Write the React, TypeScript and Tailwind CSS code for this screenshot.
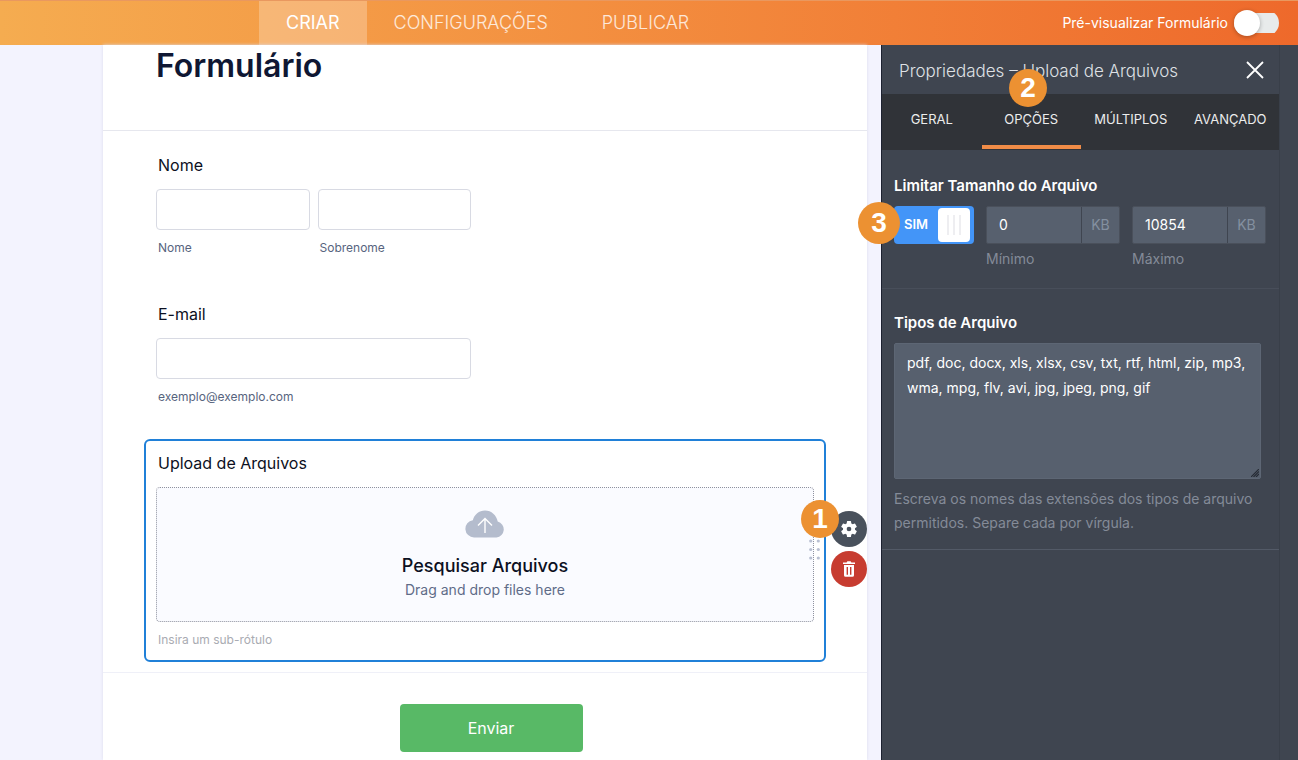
import React, { useState } from 'react';
import clsx from 'clsx';

const NAV_ITEMS = ['CRIAR', 'CONFIGURAÇÕES', 'PUBLICAR'];
const PANEL_TABS = ['GERAL', 'OPÇÕES', 'MÚLTIPLOS', 'AVANÇADO'];
const FILE_TYPES = 'pdf, doc, docx, xls, xlsx, csv, txt, rtf, html, zip, mp3, wma, mpg, flv, avi, jpg, jpeg, png, gif';

function StepBadge({ step, className }: { step: number; className: string }) {
  return (
    <span
      className={clsx(
        'absolute z-20 flex items-center justify-center rounded-full bg-[#ec9132] font-["Liberation_Sans",sans-serif] text-[28px] leading-none font-bold text-white',
        className
      )}
    >
      {step}
    </span>
  );
}

function Header() {
  const [active, setActive] = useState('CRIAR');

  return (
    <header className="flex h-[45px] items-stretch border-t border-[#e9985f] bg-linear-to-r from-[#f5ac50] to-[#ee692b]">
      <nav className="flex flex-1 pl-[259px]">
        {NAV_ITEMS.map((item) => (
          <button
            key={item}
            onClick={() => setActive(item)}
            className={clsx(
              'cursor-pointer px-[27px] text-lg',
              active === item ? 'bg-white/25 text-white' : 'font-light text-white/80'
            )}
          >
            {item}
          </button>
        ))}
      </nav>
      <label className="flex cursor-pointer items-center gap-1.5 pr-[19px] text-sm text-white">
        Pré-visualizar Formulário
        <input type="checkbox" role="switch" className="peer sr-only" />
        <span className="flex w-[45px] items-center rounded-full bg-[linear-gradient(#e8ebeb,#e8ebeb)] bg-[length:100%_20px] bg-center bg-no-repeat peer-checked:justify-end">
          <span className="size-[26px] rounded-full bg-white shadow-[0_1px_4px_rgba(0,0,0,0.3)]" />
        </span>
      </label>
    </header>
  );
}

const inputClass = 'h-[41px] w-full rounded-sm border border-[#d8dae3] bg-white px-3 text-base text-[#0a1551]';
const labelClass = 'pl-0.5 text-base leading-6 text-[#0c1022]';
const subLabelClass = 'pl-0.5 text-xs leading-5 text-[#57647e]';

function FormCanvas() {
  return (
    <main className="flex-1 bg-[#f3f3fe] pr-3.5 pl-[103px]">
      <form className="min-h-full bg-white shadow-[0_0_3px_#dcdcec]" onSubmit={(e) => e.preventDefault()}>
        <div className="h-[86px] border-b border-[#e6e7ee] px-[53px]">
          <h1 className="text-[32px] leading-[42px] font-semibold text-[#0f1733]">Formulário</h1>
        </div>

        <div className="border-b border-[#eff0f8] px-[41px] pt-[22px] pb-2.5">
          {/* Full name */}
          <fieldset className="px-3">
            <legend className={labelClass}>Nome</legend>
            <div className="grid max-w-[315px] grid-cols-2 gap-2 pt-3">
              <div className="flex flex-col gap-2">
                <input id="first-name" type="text" className={inputClass} />
                <label htmlFor="first-name" className={subLabelClass}>Nome</label>
              </div>
              <div className="flex flex-col gap-2">
                <input id="last-name" type="text" className={inputClass} />
                <label htmlFor="last-name" className={subLabelClass}>Sobrenome</label>
              </div>
            </div>
          </fieldset>

          {/* E-mail */}
          <div className="flex flex-col px-3 pt-11">
            <label htmlFor="email" className={labelClass}>E-mail</label>
            <div className="flex max-w-[315px] flex-col gap-2 pt-3">
              <input id="email" type="email" className={inputClass} aria-describedby="email-hint" />
              <span id="email-hint" className={subLabelClass}>exemplo@exemplo.com</span>
            </div>
          </div>

          {/* Selected field */}
          <section className="relative mt-8 rounded-md border-2 border-[#2080d8] px-2.5 pt-2.5 pb-2.5">
            <h2 className={labelClass}>Upload de Arquivos</h2>
            <button
              type="button"
              className="mt-3 flex h-[135px] w-full cursor-pointer flex-col items-center rounded-sm border border-dotted border-[#8f929e] bg-[#fafbff] pt-[22px]"
            >
              <svg width="40" height="28" viewBox="0 0 40 28" fill="none" aria-hidden="true">
                <path
                  d="M9 27.5a8.700 8.700 0 0 1-1.200-17.300C9.300 4.500 14 .5 20 .5c6.400 0 11.600 4.700 12.700 11.100A8.100 8.100 0 0 1 31.500 27.500Z"
                  fill="#b4bccd"
                />
                <path d="M20 23V9M13 15.500 20 8.500l7 7" stroke="#fff" strokeWidth="1.400" />
              </svg>
              <span className="pt-4 text-lg leading-6 font-medium text-[#0c1022]">Pesquisar Arquivos</span>
              <span className="text-sm leading-6 text-[#5f6c88]">Drag and drop files here</span>
            </button>
            <p className="pt-2 pl-0.5 text-xs leading-5 text-[#a9abb2]">Insira um sub-rótulo</p>

            <svg className="absolute top-[98px] right-1 cursor-move" width="11" height="22" viewBox="0 0 11 22" fill="#b9c0d2" aria-hidden="true">
              <circle cx="1.700" cy="2" r="1.600" />
              <circle cx="9.300" cy="2" r="1.600" />
              <circle cx="1.700" cy="10.500" r="1.600" />
              <circle cx="9.300" cy="10.500" r="1.600" />
              <circle cx="1.700" cy="19" r="1.600" />
              <circle cx="9.300" cy="19" r="1.600" />
            </svg>
            <div className="absolute top-[70px] -right-[43px] z-10 flex flex-col gap-1">
              <button type="button" aria-label="Propriedades" className="flex size-9 cursor-pointer items-center justify-center rounded-full bg-[#49515c] text-white">
                <svg width="20" height="20" viewBox="0 0 24 24" fill="currentColor" aria-hidden="true">
                  <path d="M19.140 12.940c.04-.3.060-.610.060-.940s-.020-.640-.070-.940l2.030-1.580a.49.490 0 0 0 .120-.610l-1.920-3.320a.49.490 0 0 0-.590-.220l-2.390.960a7 7 0 0 0-1.620-.940l-.360-2.540a.48.480 0 0 0-.480-.410h-3.840a.47.470 0 0 0-.470.410l-.360 2.540c-.590.240-1.130.570-1.620.940l-2.390-.960a.48.480 0 0 0-.590.220L2.740 8.870a.47.470 0 0 0 .120.610l2.030 1.580c-.05.3-.090.630-.090.940s.020.640.070.940l-2.030 1.580a.49.490 0 0 0-.120.610l1.920 3.320c.120.220.370.290.590.220l2.390-.960c.5.380 1.030.7 1.620.940l.360 2.540c.05.240.240.410.480.410h3.840c.240 0 .440-.170.470-.410l.360-2.540a7 7 0 0 0 1.620-.940l2.390.960c.220.080.470 0 .590-.220l1.920-3.320a.47.470 0 0 0-.120-.610ZM12 14.800a2.800 2.800 0 1 1 0-5.600 2.800 2.800 0 0 1 0 5.600Z" />
                </svg>
              </button>
              <button type="button" aria-label="Excluir" className="flex size-9 cursor-pointer items-center justify-center rounded-full bg-[#c73c30] text-white">
                <svg width="12" height="16" viewBox="0 0 12 16" fill="currentColor" aria-hidden="true">
                  <path fillRule="evenodd" d="M0 1.500h3.600L4.400.3h3.200l.8 1.200H12V3H0ZM1 4h10v10.200A1.600 1.600 0 0 1 9.400 15.800H2.600A1.600 1.600 0 0 1 1 14.200Zm2.600 2v7.800h1.400V6Zm3.400 0v7.800h1.400V6Z" />
                </svg>
              </button>
            </div>
            <StepBadge step={1} className="top-[59px] -right-[15px] size-[38px]" />
          </section>
        </div>

        <div className="flex justify-center pt-[31px] pb-2 pl-3">
          <button type="submit" className="h-12 w-[183px] cursor-pointer rounded-sm bg-[#58b966] text-base text-white">
            Enviar
          </button>
        </div>
      </form>
    </main>
  );
}

function SizeField({ id, label, defaultValue }: { id: string; label: string; defaultValue: string }) {
  return (
    <div className="flex flex-1 flex-col gap-[3px]">
      <div className="flex h-[38px] rounded-xs border border-[#4a505b] bg-[#57606e]">
        <input id={id} type="text" defaultValue={defaultValue} className="w-full min-w-0 flex-1 px-3 text-sm text-white" />
        <span className="flex w-[38px] items-center justify-center border-l border-[#3f4550] text-sm text-[#8490a0]">KB</span>
      </div>
      <label htmlFor={id} className="text-sm leading-6 text-[#848b98]">{label}</label>
    </div>
  );
}

function PropertiesPanel() {
  const [tab, setTab] = useState('OPÇÕES');

  return (
    <aside className="relative w-[417px] shrink-0 border-l border-[#1c2130] bg-[#3f4550] pr-[18px] text-white">
      <div className="flex h-[49px] items-center justify-between pr-4 pl-[17px]">
        <h2 className="pt-1 text-[17px] font-light text-[#dfe1e5]">Propriedades – Upload de Arquivos</h2>
        <button aria-label="Fechar" className="cursor-pointer">
          <svg width="18" height="18" viewBox="0 0 18 18" stroke="currentColor" strokeWidth="1.800" aria-hidden="true">
            <path d="M1 1l16 16M17 1L1 17" />
          </svg>
        </button>
      </div>

      <div role="tablist" className="grid h-14 grid-cols-4 bg-[#303338] pb-px">
        {PANEL_TABS.map((name) => (
          <button
            key={name}
            role="tab"
            aria-selected={tab === name}
            onClick={() => setTab(name)}
            className={clsx(
              'cursor-pointer border-b-4 text-[13px] text-[#eceded]',
              tab === name ? 'border-[#f08c47]' : 'border-transparent'
            )}
          >
            {name}
          </button>
        ))}
      </div>

      {/* File size limit */}
      <div className="border-b border-[#484e5a] pt-6 pr-3.5 pb-[17px] pl-3">
        <h3 className="text-[15px] leading-6 font-semibold">Limitar Tamanho do Arquivo</h3>
        <div className="flex gap-3 pt-2">
          <label className="flex h-[38px] w-20 cursor-pointer items-center justify-between rounded-sm bg-[#4395f8] pr-1 pl-2.5 text-[13px] font-semibold">
            <input type="checkbox" defaultChecked className="sr-only" aria-label="Limitar Tamanho do Arquivo" />
            SIM
            <span className="flex h-[34px] w-8 items-center justify-center gap-1 rounded-sm bg-white">
              <span className="h-5 w-0.5 bg-[#eeeef1]" />
              <span className="h-5 w-0.5 bg-[#eeeef1]" />
              <span className="h-5 w-0.5 bg-[#eeeef1]" />
            </span>
          </label>
          <SizeField id="min-size" label="Mínimo" defaultValue="0" />
          <SizeField id="max-size" label="Máximo" defaultValue="10854" />
        </div>
      </div>

      {/* Accepted extensions */}
      <div className="flex flex-col border-b border-[#535a67] pt-[22px] pr-[19px] pb-3.5 pl-3">
        <label htmlFor="file-types" className="text-[15px] leading-6 font-semibold">Tipos de Arquivo</label>
        <div className="relative pt-2">
          <textarea
            id="file-types"
            defaultValue={FILE_TYPES}
            className="block h-[136px] w-full resize-none rounded-xs border border-[#5d6674] bg-[#57606e] px-3 py-1.5 text-sm leading-[25px] text-white"
          />
          <svg className="absolute right-0.5 bottom-0.5" width="8" height="8" viewBox="0 0 8 8" stroke="#262b34" strokeWidth="1.200" aria-hidden="true">
            <path d="M0 8 8 0M2.500 8 8 2.500M5 8 8 5" />
          </svg>
        </div>
        <p className="pt-2 text-sm leading-6 text-[#848b98]">
          Escreva os nomes das extensões dos tipos de arquivo permitidos. Separe cada por vírgula.
        </p>
      </div>

      <div className="absolute inset-y-0 right-[18px] border-l border-[#393f49]" />
      <StepBadge step={2} className="top-6 left-[127px] size-[38px]" />
      <StepBadge step={3} className="top-[157px] -left-6 size-[42px]" />
    </aside>
  );
}

export default function App() {
  return (
    <div className="flex min-h-screen flex-col font-[Inter,sans-serif]">
      <Header />
      <div className="flex flex-1">
        <FormCanvas />
        <PropertiesPanel />
      </div>
    </div>
  );
}
